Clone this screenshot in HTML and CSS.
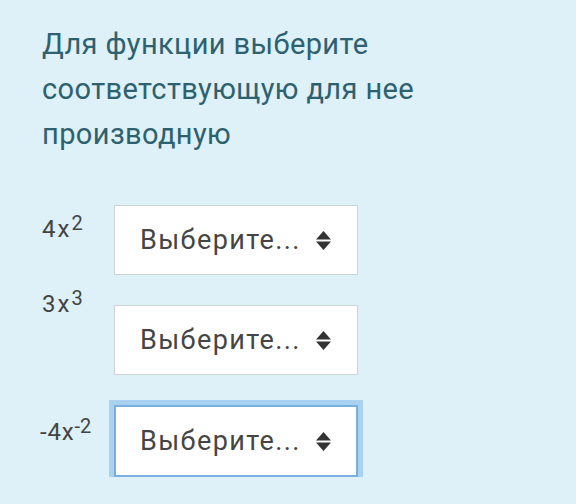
FILE: index.html
```html
<!DOCTYPE html>
<html lang="ru">
<head>
    <meta charset="UTF-8">
    <meta name="viewport" content="width=device-width, initial-scale=1.0">
    <title>Вопрос</title>
    <link rel="stylesheet" href="styles.css">
</head>
<body>
    <div class="question">
        <p class="qtext">Для функции выберите соответствующую для нее производную</p>

        <div class="answers">
            <div class="row">
                <div class="label label-first">4x<sup>2</sup></div>
                <div class="select">
                    <span>Выберите...</span>
                    <svg class="arrows" width="15" height="19" viewBox="0 0 15 19"><path d="M7.5 0 L15 8.5 L0 8.5 Z M0 10.5 L15 10.5 L7.5 19 Z" fill="#333"/></svg>
                </div>
            </div>
            <div class="row">
                <div class="label label-second">3x<sup>3</sup></div>
                <div class="select">
                    <span>Выберите...</span>
                    <svg class="arrows" width="15" height="19" viewBox="0 0 15 19"><path d="M7.5 0 L15 8.5 L0 8.5 Z M0 10.5 L15 10.5 L7.5 19 Z" fill="#333"/></svg>
                </div>
            </div>
            <div class="row">
                <div class="label label-third">-4x<sup>-2</sup></div>
                <div class="select focused">
                    <span>Выберите...</span>
                    <svg class="arrows" width="15" height="19" viewBox="0 0 15 19"><path d="M7.5 0 L15 8.5 L0 8.5 Z M0 10.5 L15 10.5 L7.5 19 Z" fill="#333"/></svg>
                </div>
            </div>
        </div>
    </div>
</body>
</html>
```

FILE: styles.css
```css
html, body {
    margin: 0;
    padding: 0;
    background-color: #def0f8;
}
body {
    font-family: Roboto, 'Liberation Sans', Arial, sans-serif;
    color: #444;
}
.question {
    padding: 22px 0 0 42px;
}
.qtext {
    margin: 0;
    width: 460px;
    font-size: 29px;
    letter-spacing: 0.4px;
    line-height: 45px;
    color: #2d6170;
}
.answers {
    margin-top: 48px;
    display: flex;
    flex-direction: column;
    gap: 30px;
}
.row {
    display: flex;
    align-items: flex-start;
}
.label {
    width: 72px;
    font-size: 24px;
    letter-spacing: 2px;
    line-height: 26px;
    color: #444;
}
.label sup {
    font-size: 20px;
    letter-spacing: 0;
    line-height: 0;
    vertical-align: 7px;
}
.label-first {
    margin-top: 11px;
}
.label-second {
    margin-top: -14px;
}
.label-third {
    margin-top: 14px;
    margin-left: -2px;
    width: 74px;
    letter-spacing: 0.8px;
}
.select {
    box-sizing: border-box;
    width: 244px;
    height: 70px;
    background: #fff;
    border: 1px solid #cdd3d6;
    display: flex;
    align-items: center;
    justify-content: space-between;
    padding: 0 26px 0 25px;
    font-size: 27px;
    letter-spacing: 1.4px;
    color: #454545;
}
.select.focused {
    height: 72px;
    border: 2px solid #79b1dc;
    box-shadow: 0 0 0 5px #a8d2ef;
    padding-left: 24px;
    padding-right: 25px;
}
.arrows {
    display: block;
}
```
